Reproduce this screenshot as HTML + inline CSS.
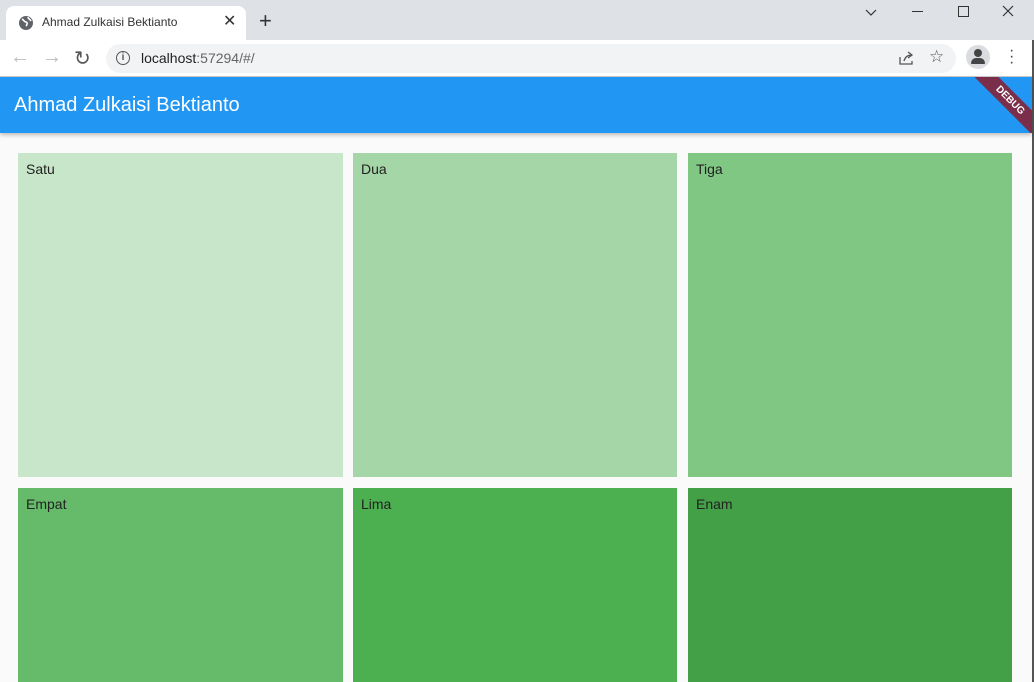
<!DOCTYPE html><html><head><style>
html,body{margin:0;width:1034px;height:682px;overflow:hidden}
body{font-family:"Liberation Sans",sans-serif;background:#fafafa;position:relative}
.a{position:absolute}
.t{position:absolute;width:325px;height:324px;box-sizing:border-box;padding:8px;font-size:14px;color:#222}
</style></head><body>
<div class="a" style="left:0;top:0;width:1034px;height:40px;background:#dee1e6"></div>
<div class="a" style="left:6px;top:6px;width:240px;height:34px;background:#fff;border-radius:8px 8px 0 0"></div>
<svg class="a" style="left:18px;top:15px" width="16" height="16" viewBox="0 0 16 16"><circle cx="8" cy="8" r="7" fill="#5f6368"/><path d="M4 4c2 1 2 3 4 3s1 3 0 4M10 2c0 2 2 2 3 4" stroke="#fff" stroke-width="1.6" fill="none"/></svg>
<div class="a" style="left:42px;top:15px;font-size:12px;color:#333">Ahmad Zulkaisi Bektianto</div>
<div class="a" style="left:223px;top:11px;font-size:16px;color:#333">✕</div>
<div class="a" style="left:259px;top:8px;font-size:22px;color:#333">+</div>
<svg class="a" style="left:864px;top:7px" width="14" height="10"><path d="M2 3l5 5 5-5" stroke="#333" fill="none" stroke-width="1.2"/></svg>
<div class="a" style="left:912px;top:11px;width:11px;height:1px;background:#333"></div>
<div class="a" style="left:958px;top:6px;width:9px;height:9px;border:1px solid #333"></div>
<svg class="a" style="left:1002px;top:5px" width="12" height="12"><path d="M1 1l10 10M11 1L1 11" stroke="#333" stroke-width="1.2"/></svg>
<div class="a" style="left:0;top:40px;width:1032px;height:36px;background:#fff;border-bottom:1px solid #ccc"></div>
<div class="a" style="left:1032px;top:40px;width:2px;height:642px;background:#555"></div>
<div class="a" style="left:10px;top:46px;font-size:20px;color:#bbb">←</div>
<div class="a" style="left:42px;top:46px;font-size:20px;color:#bbb">→</div>
<div class="a" style="left:74px;top:46px;font-size:20px;color:#555">↻</div>
<div class="a" style="left:106px;top:44px;width:850px;height:29px;background:#f1f3f4;border-radius:15px"></div>
<div class="a" style="left:116px;top:51px;width:12px;height:12px;border:1.5px solid #555;border-radius:50%;font-size:10px;text-align:center;line-height:12px;color:#555;font-weight:bold">i</div>
<div class="a" style="left:141px;top:50px;font-size:14px;color:#222">localhost<span style="color:#666">:57294/#/</span></div>
<svg class="a" style="left:898px;top:50px" width="16" height="16"><path d="M2 7v7h12v-3M6 11c1-4 4-6 8-6M10 2l4 3-4 3" stroke="#555" stroke-width="1.3" fill="none"/></svg>
<div class="a" style="left:929px;top:47px;font-size:17px;color:#555">☆</div>
<div class="a" style="left:966px;top:45px;width:24px;height:24px;border-radius:50%;background:#dadce0"></div>
<div class="a" style="left:974px;top:49px;width:8px;height:8px;border-radius:50%;background:#444"></div>
<div class="a" style="left:971px;top:58px;width:14px;height:6px;border-radius:6px 6px 1px 1px;background:#444"></div>
<div class="a" style="left:1009px;top:48px;font-size:16px;color:#444;line-height:6px">·<br>·<br>·</div>
<div class="a" style="left:0;top:77px;width:1032px;height:56px;background:#2196f3;box-shadow:0 2px 4px rgba(0,0,0,.25);overflow:hidden">
<div class="a" style="left:14px;top:17px;font-size:20px;color:#fff">Ahmad Zulkaisi Bektianto</div>
<div class="a" style="left:955px;top:15px;width:110px;height:17px;background:#7a2e4a;transform:rotate(45deg);color:#fff;font-size:10px;font-weight:bold;text-align:center;line-height:17px">DEBUG</div>
</div>
<div class="t" style="left:18px;top:153px;background:#c8e6c9">Satu</div>
<div class="t" style="left:353px;top:153px;width:324px;background:#a5d6a7">Dua</div>
<div class="t" style="left:688px;top:153px;width:324px;background:#81c784">Tiga</div>
<div class="t" style="left:18px;top:488px;height:194px;background:#66bb6a">Empat</div>
<div class="t" style="left:353px;top:488px;width:324px;height:194px;background:#4caf50">Lima</div>
<div class="t" style="left:688px;top:488px;width:324px;height:194px;background:#43a047">Enam</div>
</body></html>
